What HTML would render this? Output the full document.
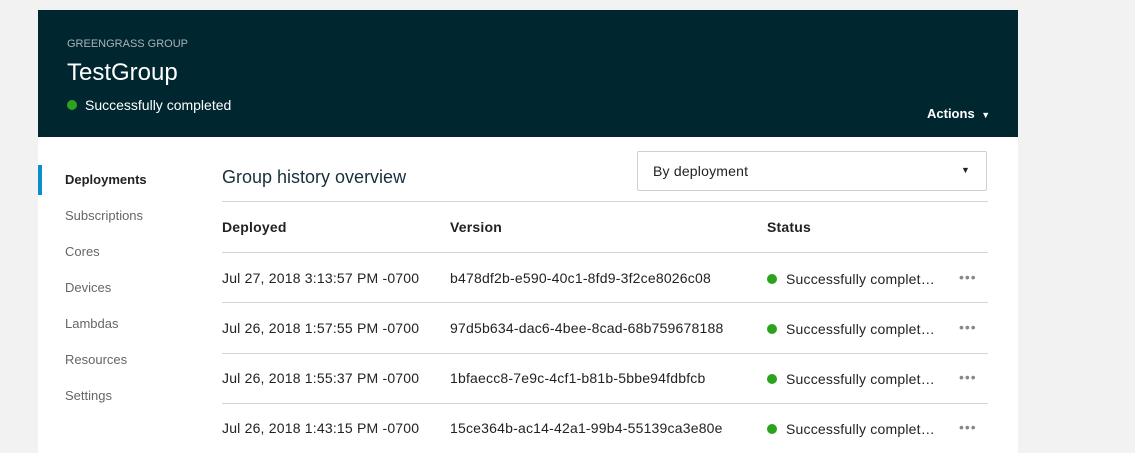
<!DOCTYPE html>
<html><head><style>
html,body{margin:0;width:1135px;height:453px;overflow:hidden}
body{background:#f2f2f2;font-family:"Liberation Sans",sans-serif;position:relative}
.card{position:absolute;left:38px;top:10px;width:980px;height:460px;background:#fff}
.hdr{position:absolute;left:0;top:0;width:980px;height:127px;background:#002630;color:#fff}
.a{position:absolute;white-space:nowrap}
.dot{display:inline-block;width:10px;height:10px;border-radius:50%;background:#2ba31f;position:relative;top:0px}
.nav{font-size:13px;color:#666}
.line{position:absolute;left:184px;width:766px;height:1px;background:#d5d5d5}
.row{font-size:14px;color:#222;letter-spacing:0.2px}
.dots{color:#888;font-size:14px;letter-spacing:1px}
</style></head><body>
<div class="card">
<div class="hdr">
<div class="a" style="left:29px;top:28px;font-size:11px;color:#a8b3b7">GREENGRASS GROUP</div>
<div class="a" style="left:29px;top:49px;font-size:24px">TestGroup</div>
<div class="a" style="left:29px;top:87px;font-size:14px"><span class="dot" style="margin-right:8px"></span>Successfully completed</div>
<div class="a" style="left:889px;top:96px;font-size:13px;font-weight:bold">Actions <span style="font-size:9px;margin-left:3px">▼</span></div>
</div>
<div class="a" style="left:0;top:155px;width:4px;height:30px;background:#0a8ec9"></div>
<div class="a nav" style="left:27px;top:162px;color:#222;font-weight:bold">Deployments</div>
<div class="a nav" style="left:27px;top:198px">Subscriptions</div>
<div class="a nav" style="left:27px;top:234px">Cores</div>
<div class="a nav" style="left:27px;top:270px">Devices</div>
<div class="a nav" style="left:27px;top:306px">Lambdas</div>
<div class="a nav" style="left:27px;top:342px">Resources</div>
<div class="a nav" style="left:27px;top:378px">Settings</div>
<div class="a" style="left:184px;top:157px;font-size:18px;color:#16313b">Group history overview</div>
<div class="a" style="left:599px;top:141px;width:348px;height:38px;border:1px solid #cfcfcf;border-radius:2px"></div>
<div class="a row" style="left:615px;top:153px">By deployment</div>
<div class="a" style="left:923px;top:155px;font-size:9px;color:#222">▼</div>
<div class="line" style="top:191px"></div>
<div class="a row" style="left:184px;top:209px;font-weight:bold">Deployed</div>
<div class="a row" style="left:412px;top:209px;font-weight:bold">Version</div>
<div class="a row" style="left:729px;top:209px;font-weight:bold">Status</div>
<div class="line" style="top:242px"></div>
<div class="a row" style="left:184px;top:260px">Jul 27, 2018 3:13:57 PM -0700</div>
<div class="a row" style="left:412px;top:260px">b478df2b-e590-40c1-8fd9-3f2ce8026c08</div>
<div class="a row" style="left:729px;top:261px"><span class="dot" style="margin-right:9px"></span>Successfully complet…</div>
<div class="a dots" style="left:921px;top:259px">•••</div>
<div class="line" style="top:292px"></div>
<div class="a row" style="left:184px;top:310px">Jul 26, 2018 1:57:55 PM -0700</div>
<div class="a row" style="left:412px;top:310px">97d5b634-dac6-4bee-8cad-68b759678188</div>
<div class="a row" style="left:729px;top:311px"><span class="dot" style="margin-right:9px"></span>Successfully complet…</div>
<div class="a dots" style="left:921px;top:309px">•••</div>
<div class="line" style="top:343px"></div>
<div class="a row" style="left:184px;top:360px">Jul 26, 2018 1:55:37 PM -0700</div>
<div class="a row" style="left:412px;top:360px">1bfaecc8-7e9c-4cf1-b81b-5bbe94fdbfcb</div>
<div class="a row" style="left:729px;top:361px"><span class="dot" style="margin-right:9px"></span>Successfully complet…</div>
<div class="a dots" style="left:921px;top:359px">•••</div>
<div class="line" style="top:393px"></div>
<div class="a row" style="left:184px;top:410px">Jul 26, 2018 1:43:15 PM -0700</div>
<div class="a row" style="left:412px;top:410px">15ce364b-ac14-42a1-99b4-55139ca3e80e</div>
<div class="a row" style="left:729px;top:411px"><span class="dot" style="margin-right:9px"></span>Successfully complet…</div>
<div class="a dots" style="left:921px;top:409px">•••</div>
<div class="line" style="top:443px"></div>
</div>
</body></html>
